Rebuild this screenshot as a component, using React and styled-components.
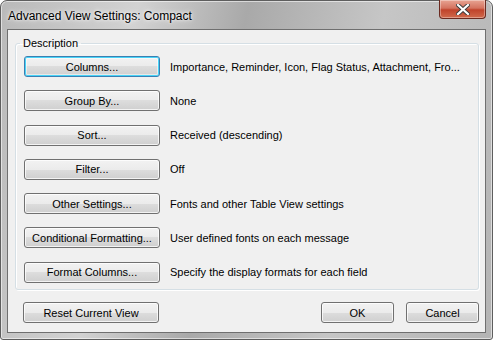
import React from "react";
import styled, { createGlobalStyle } from "styled-components";

const Global = createGlobalStyle`
  html, body {
    margin: 0;
    padding: 0;
    background: #ffffff;
  }
  body {
    font-family: "Liberation Sans", "DejaVu Sans", sans-serif;
    font-size: 11px;
    color: #000;
  }
`;

const Window = styled.div`
  position: relative;
  width: 493px;
  height: 340px;
  box-sizing: border-box;
  border: 1px solid #5e5e5e;
  border-radius: 7px 7px 3px 3px;
  background: linear-gradient(100deg, #b9b9b9 0%, #d2d2d2 25%, #a9a9a9 45%, #c6c6c6 70%, #b4b4b4 100%);
  box-shadow: inset 0 0 0 1px rgba(255, 255, 255, 0.55);
  display: flex;
  flex-direction: column;
  padding: 0 6px 6px 6px;
`;

const TitleBar = styled.div`
  height: 28px;
  display: flex;
  align-items: center;
`;

const Title = styled.div`
  padding-left: 1px;
  margin-top: 1px;
  font-size: 12px;
  color: #000;
  text-shadow: 0 0 6px rgba(255, 255, 255, 0.9), 0 0 3px rgba(255, 255, 255, 0.9);
`;

const CloseButton = styled.div`
  position: absolute;
  top: -1px;
  right: 6px;
  width: 47px;
  height: 19px;
  box-sizing: border-box;
  border: 1px solid #6b2a20;
  border-top: none;
  border-radius: 0 0 4px 4px;
  background: linear-gradient(#e8a493 0%, #d4735f 45%, #c0432b 55%, #d06a4c 100%);
  box-shadow: inset 0 0 0 1px rgba(255, 255, 255, 0.35);
  display: flex;
  align-items: center;
  justify-content: center;
`;

const Client = styled.div`
  flex: 1;
  box-sizing: border-box;
  border: 1px solid #6f6f6f;
  background: #f0f0f0;
  padding: 7px 6px 8px 7px;
  display: flex;
  flex-direction: column;
`;

const Group = styled.fieldset`
  margin: 0;
  padding: 7px 8px 0 8px;
  height: 253px;
  box-sizing: border-box;
  border: 1px solid #d5dfe5;
  border-radius: 3px;
  box-shadow: 1px 1px 0 #ffffff inset, 1px 1px 0 #ffffff;
  min-width: 0;
`;

const Legend = styled.legend`
  padding: 0 3px;
  margin-left: -4px;
  font-size: 11px;
`;

const Rows = styled.div`
  display: grid;
  grid-template-columns: 136px 1fr;
  column-gap: 10px;
  row-gap: 13.3px;
  align-items: center;
`;

const Button = styled.div`
  height: 21px;
  box-sizing: border-box;
  border: 1px solid ${({ focused }) => (focused ? "#3c7fb1" : "#707070")};
  border-radius: 3px;
  background: linear-gradient(#f2f2f2 0%, #ebebeb 50%, #dddddd 50%, #cfcfcf 100%);
  box-shadow: ${({ focused }) =>
    focused ? "inset 0 0 0 1px #48d4f8, inset 0 0 0 2px rgba(255,255,255,0.5)" : "inset 0 0 0 1px rgba(255,255,255,0.75)"};
  display: flex;
  align-items: center;
  justify-content: center;
  white-space: nowrap;
  width: ${({ width }) => width || "auto"};
`;

const Label = styled.div`
  white-space: nowrap;
  overflow: hidden;
`;

const Footer = styled.div`
  margin-top: 12px;
  padding-left: 8px;
  display: flex;
  align-items: center;
  gap: 12px;
`;

const Spacer = styled.div`
  flex: 1;
`;

const rows = [
  ["Columns...", "Importance, Reminder, Icon, Flag Status, Attachment, Fro...", true],
  ["Group By...", "None"],
  ["Sort...", "Received (descending)"],
  ["Filter...", "Off"],
  ["Other Settings...", "Fonts and other Table View settings"],
  ["Conditional Formatting...", "User defined fonts on each message"],
  ["Format Columns...", "Specify the display formats for each field"],
];

export default function App() {
  return (
    <>
      <Global />
      <Window>
        <TitleBar>
          <Title>Advanced View Settings: Compact</Title>
        </TitleBar>
        <CloseButton>
          <svg width="14" height="11" viewBox="0 0 14 11">
            <path
              d="M2 1 L12 10 M12 1 L2 10"
              stroke="#3a3a3a"
              strokeWidth="4"
              strokeLinecap="square"
            />
            <path
              d="M2 1 L12 10 M12 1 L2 10"
              stroke="#ffffff"
              strokeWidth="2.2"
              strokeLinecap="square"
            />
          </svg>
        </CloseButton>
        <Client>
          <Group>
            <Legend>Description</Legend>
            <Rows>
              {rows.map(([btn, text, focused]) => (
                <React.Fragment key={btn}>
                  <Button focused={focused}>{btn}</Button>
                  <Label>{text}</Label>
                </React.Fragment>
              ))}
            </Rows>
          </Group>
          <Footer>
            <Button width="136px">Reset Current View</Button>
            <Spacer />
            <Button width="73px">OK</Button>
            <Button width="73px">Cancel</Button>
          </Footer>
        </Client>
      </Window>
    </>
  );
}
